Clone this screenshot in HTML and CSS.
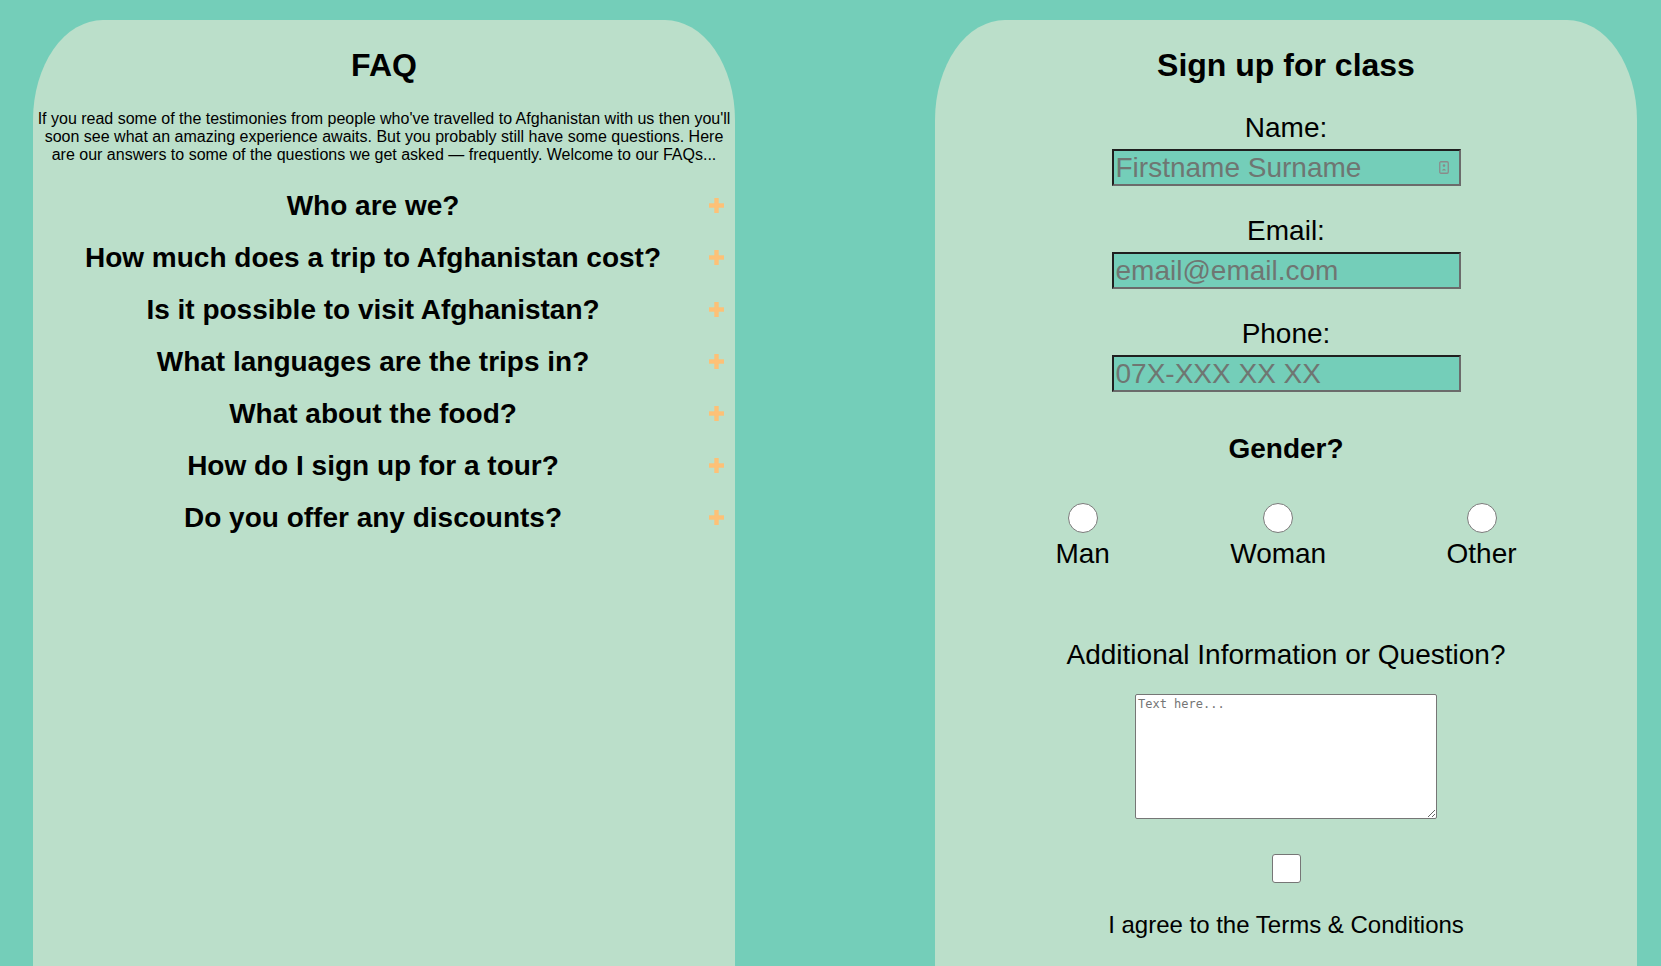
FILE: index.html
```html
<!DOCTYPE html>
<html lang="en">
<head>
<meta charset="utf-8">
<title>FAQ &amp; Sign up for class</title>
<link rel="stylesheet" href="styles.css">
</head>
<body>
<main class="page">
  <section class="panel faq">
    <h1 class="panel-title">FAQ</h1>
    <p class="intro">If you read some of the testimonies from people who've travelled to Afghanistan with us then you'll soon see what an amazing experience awaits. But you probably still have some questions. Here are our answers to some of the questions we get asked — frequently. Welcome to our FAQs...</p>
    <ul class="questions">
      <li class="question"><span class="q-text">Who are we?</span><svg class="plus" viewBox="0 0 15 15" width="15" height="15"><rect x="0" y="5.3" width="15" height="4.4"/><rect x="5.3" y="0" width="4.4" height="15"/></svg></li>
      <li class="question"><span class="q-text">How much does a trip to Afghanistan cost?</span><svg class="plus" viewBox="0 0 15 15" width="15" height="15"><rect x="0" y="5.3" width="15" height="4.4"/><rect x="5.3" y="0" width="4.4" height="15"/></svg></li>
      <li class="question"><span class="q-text">Is it possible to visit Afghanistan?</span><svg class="plus" viewBox="0 0 15 15" width="15" height="15"><rect x="0" y="5.3" width="15" height="4.4"/><rect x="5.3" y="0" width="4.4" height="15"/></svg></li>
      <li class="question"><span class="q-text">What languages are the trips in?</span><svg class="plus" viewBox="0 0 15 15" width="15" height="15"><rect x="0" y="5.3" width="15" height="4.4"/><rect x="5.3" y="0" width="4.4" height="15"/></svg></li>
      <li class="question"><span class="q-text">What about the food?</span><svg class="plus" viewBox="0 0 15 15" width="15" height="15"><rect x="0" y="5.3" width="15" height="4.4"/><rect x="5.3" y="0" width="4.4" height="15"/></svg></li>
      <li class="question"><span class="q-text">How do I sign up for a tour?</span><svg class="plus" viewBox="0 0 15 15" width="15" height="15"><rect x="0" y="5.3" width="15" height="4.4"/><rect x="5.3" y="0" width="4.4" height="15"/></svg></li>
      <li class="question"><span class="q-text">Do you offer any discounts?</span><svg class="plus" viewBox="0 0 15 15" width="15" height="15"><rect x="0" y="5.3" width="15" height="4.4"/><rect x="5.3" y="0" width="4.4" height="15"/></svg></li>
    </ul>
  </section>

  <section class="panel signup">
    <h1 class="panel-title">Sign up for class</h1>
    <form class="form">
      <label class="field-label first" for="name">Name:</label>
      <div class="input-wrap">
        <input class="text-input" id="name" type="text" placeholder="Firstname Surname">
        <svg class="contact-icon" viewBox="0 0 10 13" width="10" height="13"><rect x="0.75" y="0.75" width="8.5" height="11.5" rx="1.2" fill="none" stroke="#8a8a8a" stroke-width="1.3"/><circle cx="5" cy="4.6" r="1.3" fill="#8a8a8a"/><path d="M2.8 9.4 Q5 6.2 7.2 9.4 Z" fill="#8a8a8a"/></svg>
      </div>

      <label class="field-label second" for="email">Email:</label>
      <div class="input-wrap">
        <input class="text-input" id="email" type="email" placeholder="email@email.com">
      </div>

      <label class="field-label" for="phone">Phone:</label>
      <div class="input-wrap">
        <input class="text-input" id="phone" type="tel" placeholder="07X-XXX XX XX">
      </div>

      <div class="group-title">Gender?</div>
      <div class="radio-row">
        <label class="radio-option"><input class="radio" type="radio" name="gender"><span>Man</span></label>
        <label class="radio-option"><input class="radio" type="radio" name="gender"><span>Woman</span></label>
        <label class="radio-option"><input class="radio" type="radio" name="gender"><span>Other</span></label>
      </div>

      <label class="field-label extra" for="info">Additional Information or Question?</label>
      <textarea class="message" id="info" placeholder="Text here..."></textarea>

      <input class="check" id="terms" type="checkbox">
      <label class="terms" for="terms">I agree to the Terms &amp; Conditions</label>
    </form>
  </section>
</main>
</body>
</html>
```

FILE: styles.css
```css
* {
  box-sizing: border-box;
}

html, body {
  margin: 0;
  height: 100%;
}

body {
  background: #74ceb9;
  font-family: "Liberation Sans", Arial, sans-serif;
  color: #000;
  overflow: hidden;
}

.page {
  display: flex;
  gap: 200px;
  height: 100vh;
  padding: 20px 0 0 33px;
}

.panel {
  width: 702px;
  flex: 0 0 702px;
  background: #bbdfca;
  border-radius: 70px 70px 0 0 / 100px 100px 0 0;
  display: flex;
  flex-direction: column;
  align-items: center;
}

.panel-title {
  margin: 27px 0 0;
  font-size: 32px;
  line-height: 37px;
  font-weight: bold;
  text-align: center;
}

/* FAQ */
.intro {
  margin: 25.6px 0 0;
  width: 100%;
  font-size: 16px;
  line-height: 18px;
  text-align: center;
}

.questions {
  list-style: none;
  margin: 16.4px 0 0;
  padding: 0;
  width: 100%;
}

.question {
  display: flex;
  align-items: center;
  height: 52px;
  padding: 0 11px 0 4px;
}

.q-text {
  flex: 1;
  text-align: center;
  font-size: 28px;
  line-height: 32px;
  font-weight: bold;
}

.plus {
  flex: 0 0 15px;
  fill: #fdc177;
}

/* Sign up form */
.form {
  width: 100%;
  display: flex;
  flex-direction: column;
  align-items: center;
}

.field-label {
  display: block;
  margin-top: 29px;
  font-size: 28px;
  line-height: 32px;
  text-align: center;
}

.field-label.first {
  margin-top: 28px;
}

.field-label.second {
  margin-top: 29px;
}

.input-wrap {
  position: relative;
  margin-top: 5px;
  width: 349px;
}

.text-input {
  display: block;
  width: 349px;
  height: 37px;
  margin: 0;
  padding: 1px 2px;
  background: #74ceb9;
  border-style: solid;
  border-width: 2px;
  border-color: #1f1f1f #6b6b6b #6b6b6b #1f1f1f;
  font-family: "Liberation Sans", Arial, sans-serif;
  font-size: 28px;
  line-height: 32px;
  color: #000;
  outline: none;
}

.text-input::placeholder {
  color: #6f7672;
  opacity: 1;
}

.contact-icon {
  position: absolute;
  right: 12px;
  top: 12px;
}

.group-title {
  margin-top: 41px;
  font-size: 28px;
  line-height: 32px;
  font-weight: bold;
}

.radio-row {
  width: 100%;
  margin-top: 38px;
  display: flex;
  justify-content: space-evenly;
}

.radio-option {
  display: flex;
  flex-direction: column;
  align-items: center;
  font-size: 28px;
  line-height: 32px;
}

.radio {
  appearance: none;
  -webkit-appearance: none;
  width: 30px;
  height: 30px;
  margin: 0 0 5px;
  border: 1px solid #7a7a7a;
  border-radius: 50%;
  background: #fff;
}

.field-label.extra {
  margin-top: 68.6px;
}

.message {
  display: block;
  margin-top: 23.4px;
  width: 302px;
  height: 125px;
  padding: 2px;
  border: 1px solid #767676;
  border-radius: 2px;
  background: #fff;
  font-family: "DejaVu Sans Mono", "Liberation Mono", monospace;
  font-size: 12px;
}

.message::placeholder {
  color: #757575;
}

.check {
  appearance: none;
  -webkit-appearance: none;
  display: block;
  margin: 35px 0 0;
  width: 29px;
  height: 29px;
  border: 1px solid #767676;
  border-radius: 3px;
  background: #fff;
}

.terms {
  display: block;
  margin-top: 28px;
  font-size: 24px;
  line-height: 28px;
  text-align: center;
}
```
